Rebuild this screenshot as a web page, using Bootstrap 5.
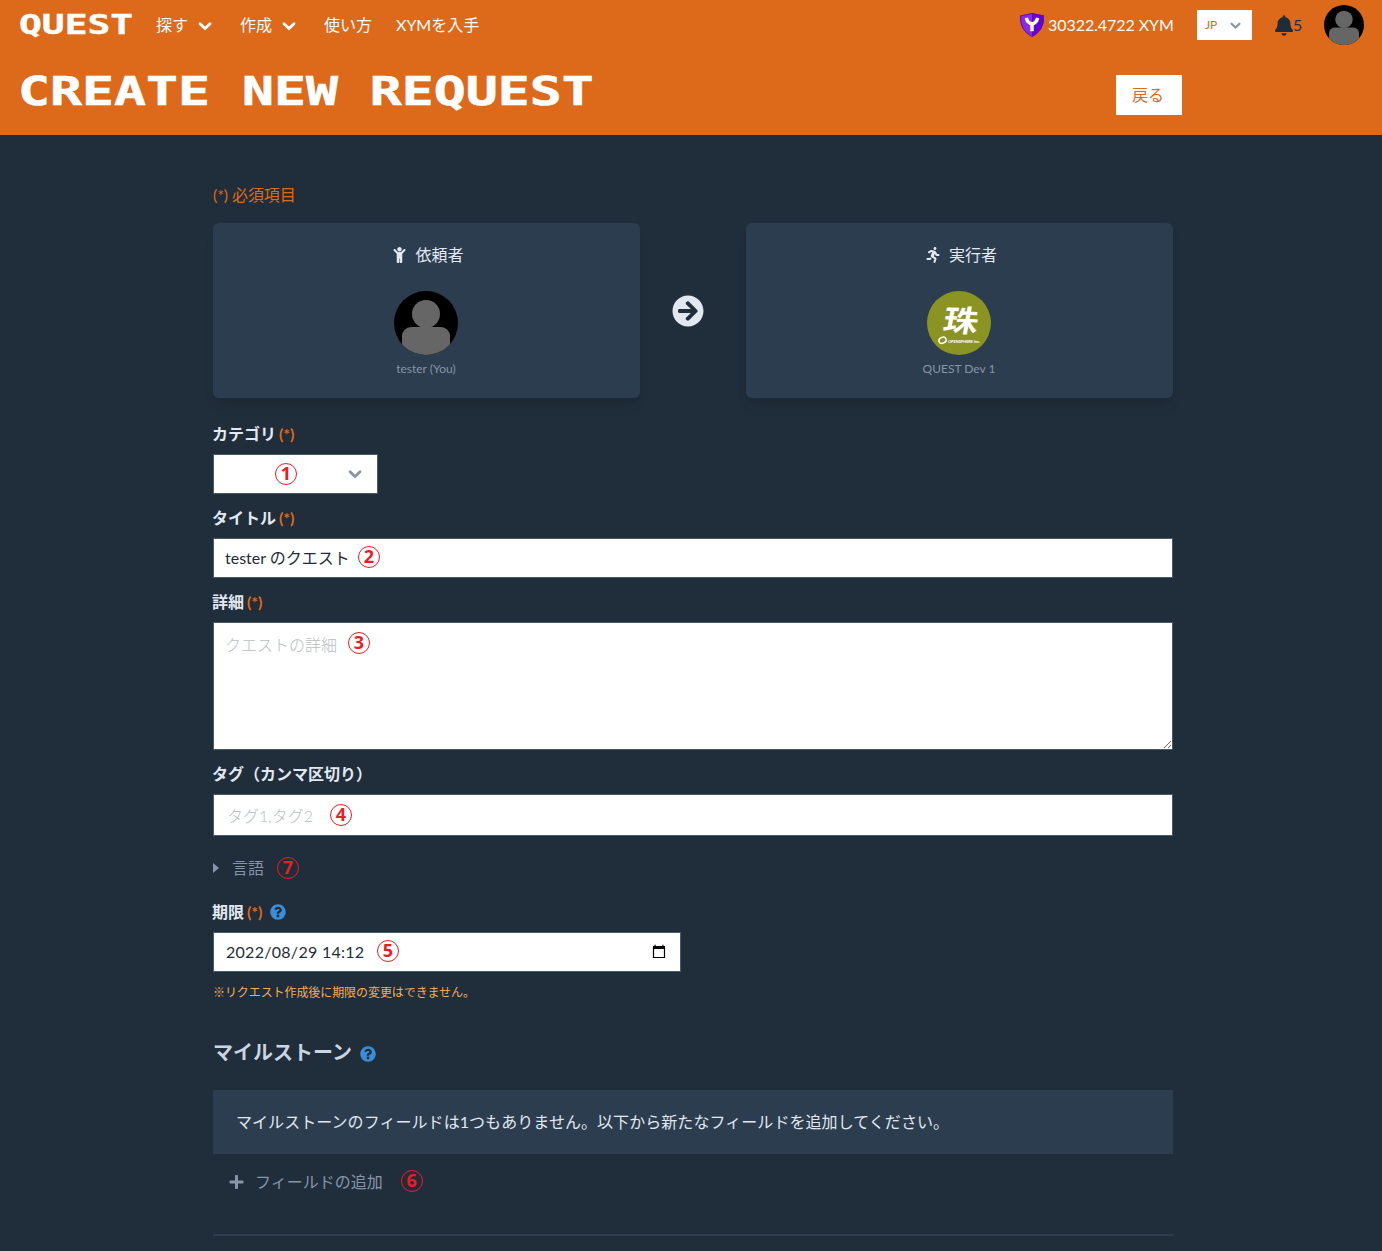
<!DOCTYPE html>
<html lang="ja">
<head>
<meta charset="utf-8">
<meta name="viewport" content="width=device-width, initial-scale=1">
<title>QUEST - Create new request</title>
<link href="https://cdn.jsdelivr.net/npm/bootstrap@5.3.0/dist/css/bootstrap.min.css" rel="stylesheet">
<style>
body{font-family:Lato,"Noto Sans CJK JP",sans-serif;font-size:16px;line-height:24px;background:#202d3a;color:#e2e8f0;height:1251px;overflow:hidden}
svg{display:block;flex:none}
.site-head{background:#dd691b;height:135px;color:#fff}
.top-bar{height:50px;padding:0 18px 0 19px}
.pixel{font-family:"DejaVu Sans Mono",monospace;font-weight:700;line-height:1;white-space:pre;transform-origin:0 50%;margin:0;color:#fff}
.brand-box{width:137px}
.brand-px{font-size:27.4px;transform:scaleX(1.385);-webkit-text-stroke:.4px #fff;margin-top:1px}
.title-px{font-size:38.4px;transform:scaleX(1.384);-webkit-text-stroke:.6px #fff}
.title-bar{height:85px;padding:0 200px 0 18px}
.menu-link{color:#fff;text-decoration:none}
.nav-group{width:84px}
.nav-group svg{margin:2px 0 0 10px}
.btn-back{width:66px;height:40px;background:#fff;color:#dd691b;border-radius:0;padding:0 2px 0 0;margin-top:5px}
.balance{width:149px;padding-left:4px;letter-spacing:-.06px}
.lang-box{width:55px;height:30px;background:#fff;color:#dd691b;font-size:12px;padding:0 11px 0 8px;margin-left:4px}
.bell-box{color:#1f2d3a;width:49px;margin-left:23px}
.page-main{width:960px;margin-left:213px;padding-top:48px}
.req{color:#dd691b}
.person-card{width:427px;height:175px;background:#2b3d4f;border-radius:6px;box-shadow:0 10px 15px -3px rgba(0,0,0,.06),0 4px 6px -2px rgba(0,0,0,.03);padding:20px 1px 0 0}
.person-name{font-size:12px;line-height:16px;color:#8795a8;margin-top:6px}
.arrow-col{width:106px;padding-right:11px}
.field-label{font-weight:700;height:24px;margin-bottom:8px;text-indent:-1px}
.field-label .req{margin-left:-1px}
.form-control.sharp{border:1px solid #4a5a6b;border-radius:0;background:#fff;color:#1f2d3a;font-size:16px;padding:0 11px 2px;height:40px;line-height:24px}
.form-control.sharp::placeholder{color:#b8bcc2;opacity:1;font-weight:300}
textarea.form-control.sharp{height:128px;padding-top:10px;display:block}
.form-control.tag-input{height:42px;padding:0 13px}
.form-control.date-input{letter-spacing:.28px;padding-left:12px}
.field-block{margin-bottom:12px}
.num{width:22px;height:22px;border:1.3px solid #ed1c24;border-radius:50%;color:#ed1c24;font:700 18px/18px "Open Sans","Noto Sans",sans-serif;text-align:center;flex:none;display:block}
.num.over{position:absolute;z-index:2}
.muted-ink{color:#8795a8;height:24px}
.note{color:#f6ad55;font-size:12px;line-height:18px;margin-top:12px;letter-spacing:-.08px}
.ms-title{font-size:20px;line-height:30px;font-weight:700;color:#cbd5e0;margin:35px 0 23px}
.ms-box{background:#2b3d4f;height:64px;padding:0 23px;letter-spacing:.06px}
.rule{height:2px;background:#2b3d4f;margin-top:40px}
</style>
<script src="https://cdn.jsdelivr.net/npm/bootstrap@5.3.0/dist/js/bootstrap.bundle.min.js"></script>
</head>
<body>
<svg width="0" height="0" class="position-absolute">
<defs>
<symbol id="help" viewBox="0 0 512 512"><path d="M504 256c0 136.997-111.043 248-248 248S8 392.997 8 256C8 119.083 119.043 8 256 8s248 111.083 248 248zM262.655 90c-54.497 0-89.255 22.957-116.549 63.758-3.536 5.286-2.353 12.415 2.715 16.258l34.699 26.31c5.205 3.947 12.621 3.008 16.665-2.122 17.864-22.658 30.113-35.797 57.303-35.797 20.429 0 45.698 13.148 45.698 32.958 0 14.976-12.363 22.667-32.534 33.976C247.128 238.528 216 254.941 216 296v4c0 6.627 5.373 12 12 12h56c6.627 0 12-5.373 12-12v-1.333c0-28.462 83.186-29.647 83.186-106.667 0-58.002-60.165-102-116.531-102zM256 338c-25.365 0-46 20.635-46 46 0 25.364 20.635 46 46 46s46-20.636 46-46c0-25.365-20.635-46-46-46z"/></symbol>
<symbol id="chev" viewBox="0 0 14 14"><path d="M2 4.8 7 9.600 12 4.800" fill="none" stroke="currentColor" stroke-width="2.800" stroke-linecap="round" stroke-linejoin="miter"/></symbol>
<symbol id="avatar" viewBox="0 0 64 64"><clipPath id="avc"><circle cx="32" cy="32" r="32"/></clipPath><g clip-path="url(#avc)"><rect width="64" height="64" fill="#000"/><circle cx="32" cy="23" r="14" fill="#666"/><rect x="8" y="36" width="48" height="40" rx="9" fill="#666"/></g></symbol>
</defs>
</svg>

<header class="site-head">
  <nav class="top-bar d-flex align-items-center">
    <div class="brand-box"><div class="pixel brand-px d-inline-block">QUEST</div></div>
    <a class="menu-link nav-group d-flex align-items-center">探す<svg width="14" height="14"><use href="#chev"/></svg></a>
    <a class="menu-link nav-group d-flex align-items-center">作成<svg width="14" height="14"><use href="#chev"/></svg></a>
    <a class="menu-link" style="width:72px">使い方</a>
    <a class="menu-link">XYMを入手</a>
    <div class="ms-auto d-flex align-items-center">
      <svg width="24" height="24" viewBox="0 0 24 24"><path d="M12 0Q18 1.500 24 2.500 25 17 12 24-1 17 0 2.500 6 1.500 12 0z" fill="#8a2be2"/><path d="M12 0Q18 1.500 24 2.500 25 17 12 24z" fill="#6a00d8"/><path d="M12 .4Q18 1.900 23.600 2.900 24.500 17 12 23.600-.5 17 .4 2.900 6 1.900 12 .4z" fill="none" stroke="#5414a8" stroke-width=".9"/><path d="M6.800 6.500Q7.500 9.800 12 11M17.200 6.500Q16.500 9.800 12 11V16.500" fill="none" stroke="#fff" stroke-width="3.400" stroke-linecap="square"/></svg>
      <span class="balance">30322.4722 XYM</span>
      <span class="lang-box d-flex align-items-center justify-content-between">JP<svg width="11" height="11" style="color:#8795a8"><use href="#chev"/></svg></span>
      <span class="bell-box d-flex align-items-center"><svg width="18" height="21" viewBox="0 0 448 512" fill="currentColor"><path d="M224 512c35.320 0 63.970-28.650 63.970-64H160.030c0 35.350 28.650 64 63.970 64zm215.390-149.710c-19.320-20.760-55.470-51.990-55.470-154.290 0-77.700-54.480-139.900-127.940-155.160V32c0-17.670-14.320-32-31.980-32s-31.980 14.330-31.980 32v20.840C118.560 68.100 64.080 130.300 64.080 208c0 102.300-36.150 133.530-55.470 154.290-6 6.450-8.660 14.160-8.610 21.710.11 16.400 12.980 32 32.100 32h383.800c19.120 0 32-15.600 32.100-32 .05-7.550-2.610-15.270-8.610-21.710z"/></svg><span>5</span></span>
      <svg width="40" height="40"><use href="#avatar"/></svg>
    </div>
  </nav>
  <div class="title-bar d-flex align-items-center justify-content-between">
    <h1 class="pixel title-px">CREATE NEW REQUEST</h1>
    <button class="btn btn-back">戻る</button>
  </div>
</header>

<main class="page-main">
  <div class="req" style="margin-bottom:16px;letter-spacing:-.1px">(*) 必須項目</div>
  <div class="d-flex" style="margin-bottom:24px">
    <section class="person-card d-flex flex-column align-items-center">
      <div class="d-flex align-items-center"><svg width="13" height="16" viewBox="0 0 384 512" fill="#e2e8f0" style="margin:0 9px 0 5px"><path d="M120 72c0-39.765 32.235-72 72-72s72 32.235 72 72c0 39.764-32.235 72-72 72s-72-32.236-72-72zm254.627 1.373c-12.496-12.497-32.758-12.497-45.254 0L242.745 160H141.254L54.627 73.373c-12.496-12.497-32.758-12.497-45.254 0-12.497 12.497-12.497 32.758 0 45.255L104 213.254V480c0 17.673 14.327 32 32 32h16c17.673 0 32-14.327 32-32V368h16v112c0 17.673 14.327 32 32 32h16c17.673 0 32-14.327 32-32V213.254l94.627-94.627c12.497-12.497 12.497-32.757 0-45.254z"/></svg>依頼者</div>
      <svg width="64" height="64" style="margin-top:24px"><use href="#avatar"/></svg>
      <div class="person-name">tester (You)</div>
    </section>
    <div class="arrow-col d-flex align-items-center justify-content-center">
      <svg width="32" height="32" viewBox="0 0 512 512" fill="#e2e8f0"><path d="M256 8c137 0 248 111 248 248S393 504 256 504 8 393 8 256 119 8 256 8zm-28.900 143.600l75.500 72.400H120c-13.300 0-24 10.700-24 24v16c0 13.300 10.700 24 24 24h182.600l-75.500 72.400c-9.700 9.300-9.900 24.800-.4 34.300l11 10.900c9.400 9.400 24.600 9.400 33.900 0L404.300 273c9.400-9.400 9.400-24.600 0-33.900L271.600 106.300c-9.400-9.400-24.600-9.400-33.900 0l-11 10.900c-9.500 9.600-9.300 25.100.4 34.400z"/></svg>
    </div>
    <section class="person-card d-flex flex-column align-items-center">
      <div class="d-flex align-items-center"><svg width="14" height="16" viewBox="0 0 416 512" fill="#e2e8f0" style="margin:0 9px 0 5px"><path d="M272 96c26.510 0 48-21.490 48-48S298.510 0 272 0s-48 21.490-48 48 21.490 48 48 48zM113.690 317.470l-14.800 34.520H32c-17.670 0-32 14.330-32 32s14.330 32 32 32h77.450c19.250 0 36.580-11.440 44.110-29.090l8.790-20.520-10.670-6.300c-17.320-10.230-30.060-25.370-37.990-42.610zM384 223.990h-44.030l-26.060-53.250c-12.500-25.550-35.450-44.230-61.780-50.940l-71.080-21.140c-28.300-6.800-57.770-.55-80.840 17.140l-39.670 30.410c-14.030 10.750-16.690 30.830-5.940 44.860s30.840 16.690 44.860 5.940l39.690-30.410c7.670-5.890 17.440-8 25.270-6.140l14.700 4.370-37.460 87.390c-12.620 29.480-1.310 64.010 26.300 80.310l84.980 50.170-27.470 87.730c-5.280 16.860 4.110 34.820 20.970 40.090 3.190 1 6.410 1.480 9.580 1.480 13.610 0 26.230-8.770 30.520-22.450l31.640-101.060c5.910-20.770-2.890-43.080-21.640-54.390l-61.240-36.140 31.310-78.280 20.270 41.430c8 16.340 24.920 26.890 43.110 26.890H384c17.670 0 32-14.330 32-32s-14.330-31.990-32-31.990z"/></svg>実行者</div>
      <svg width="64" height="64" viewBox="0 0 64 64" style="margin-top:24px"><circle cx="32" cy="32" r="32" fill="#8b9423"/><g transform="translate(14.500 40) rotate(2) skewX(-8)"><text font-family="Noto Sans CJK JP,sans-serif" font-weight="700" font-size="30" textLength="35" lengthAdjust="spacingAndGlyphs" fill="#fff">珠</text></g><ellipse cx="15.500" cy="49.300" rx="3.700" ry="2.900" fill="none" stroke="#fff" stroke-width="1.500" transform="rotate(-25 15.500 49.300)"/><text x="21" y="51.600" font-family="Lato,sans-serif" font-weight="900" font-size="4.200" textLength="32" lengthAdjust="spacingAndGlyphs" fill="#fff">OPENSPHERE Inc.</text></svg>
      <div class="person-name">QUEST Dev 1</div>
    </section>
  </div>

  <form>
    <div class="field-block">
      <div class="field-label">カテゴリ <span class="req">(*)</span></div>
      <div class="position-relative" style="width:165px">
        <div class="form-control sharp d-flex align-items-center justify-content-end"><svg width="14" height="14" style="color:#8795a8;margin:1px 4px 0 0"><use href="#chev"/></svg></div>
        <span class="num over" style="left:62px;top:9px">1</span>
      </div>
    </div>
    <div class="field-block">
      <div class="field-label">タイトル <span class="req">(*)</span></div>
      <div class="position-relative"><input class="form-control sharp" value="tester のクエスト"><span class="num over" style="left:145px;top:8px">2</span></div>
    </div>
    <div class="field-block">
      <div class="field-label">詳細 <span class="req">(*)</span></div>
      <div class="position-relative"><textarea class="form-control sharp" placeholder="クエストの詳細"></textarea><span class="num over" style="left:135px;top:10px">3</span></div>
    </div>
    <div style="margin-bottom:20px">
      <div class="field-label">タグ（カンマ区切り）</div>
      <div class="position-relative"><input class="form-control sharp tag-input" placeholder="タグ1,タグ2"><span class="num over" style="left:117px;top:10px">4</span></div>
    </div>
    <div class="muted-ink d-flex align-items-center" style="margin-bottom:20px"><svg width="6" height="10" viewBox="0 0 6 10" fill="currentColor"><path d="M0 0 6 5 0 10z"/></svg><span style="margin:0 13px 0 13px">言語</span><span class="num">7</span></div>
    <div class="field-label d-flex align-items-center"><span>期限 <span class="req">(*)</span></span><svg width="16" height="16" fill="#3a8dd6" style="margin-left:8px"><use href="#help"/></svg></div>
    <div class="position-relative" style="width:468px">
      <input class="form-control sharp date-input" value="2022/08/29 14:12">
      <span class="num over" style="left:164px;top:8px">5</span>
      <svg width="14" height="15" viewBox="0 0 14 15" class="position-absolute" style="right:15px;top:12px"><path d="M1.500 3h11v10.500h-11z" fill="none" stroke="#000" stroke-width="1.200"/><path d="M1 2h12v3H1zM2.500.8h1.200V3H2.500zM10.300.8h1.200V3h-1.200z"/></svg>
    </div>
    <div class="note">※リクエスト作成後に期限の変更はできません。</div>
    <h2 class="ms-title d-flex align-items-center">マイルストーン<svg width="16" height="16" fill="#3a8dd6" style="margin:3px 0 0 8px"><use href="#help"/></svg></h2>
    <div class="ms-box d-flex align-items-center">マイルストーンのフィールドは1つもありません。以下から新たなフィールドを追加してください。</div>
    <div class="muted-ink d-flex align-items-center" style="margin:16px 0 0 16px"><svg width="15" height="16" viewBox="0 0 448 512" fill="currentColor"><path d="M416 208H272V64c0-17.670-14.330-32-32-32h-32c-17.670 0-32 14.330-32 32v144H32c-17.670 0-32 14.330-32 32v32c0 17.670 14.330 32 32 32h144v144c0 17.670 14.330 32 32 32h32c17.670 0 32-14.330 32-32V304h144c17.670 0 32-14.330 32-32v-32c0-17.670-14.330-32-32-32z"/></svg><span style="margin:0 18px 0 11px">フィールドの追加</span><span class="num" style="margin-bottom:2px">6</span></div>
    <div class="rule"></div>
  </form>
</main>
</body>
</html>
